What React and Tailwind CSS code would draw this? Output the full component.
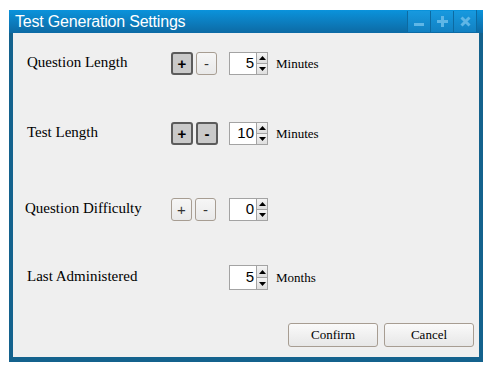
import React, { useState } from 'react';

const serif = { fontFamily: '"Liberation Serif", "Times New Roman", serif' };

const TitleButton = ({ children }) => (
    <div className="w-[23px] h-[21px] mt-[1px] bg-gradient-to-b from-[#1799df] to-[#1281c2] border-l border-[#0d6aa1] flex items-center justify-center">
        {children}
    </div>
);

const ToggleButton = ({ label, pressed, bold, className = '' }) => (
    <button
        className={`h-[23px] rounded-[3px] flex items-center justify-center text-[15px] leading-none ${pressed ? 'bg-[#c9c9c9] border-2 border-[#5b5b5b] text-black font-bold' : 'bg-gradient-to-b from-[#f6f6f6] to-[#e9e9e9] border border-[#a79d92] text-[#333]'} ${className}`}
        style={{ fontFamily: '"Liberation Sans", Arial, sans-serif' }}
    >
        <span className={bold ? 'font-bold' : ''}>{label}</span>
    </button>
);

const Spinner = ({ value, tall }) => (
    <div className="flex items-stretch">
        <div
            className={`w-[28px] ${tall ? 'h-[25px]' : 'h-[23px]'} bg-white border border-[#a3a3a3] flex items-center justify-end pr-[2px] text-[15px] text-black`}
            style={{ fontFamily: '"Liberation Sans", Arial, sans-serif' }}
        >
            {value}
        </div>
        <div className="w-[11px] flex flex-col border border-l-0 border-[#a3a3a3]">
            <div className="flex-1 bg-gradient-to-b from-[#f4f4f4] to-[#dedede] border-b border-[#a3a3a3] flex items-center justify-center">
                <svg width="7" height="4" viewBox="0 0 7 4"><path d="M3.5 0 L7 4 L0 4 Z" fill="#000" /></svg>
            </div>
            <div className="flex-1 bg-gradient-to-b from-[#f4f4f4] to-[#dedede] flex items-center justify-center">
                <svg width="7" height="4" viewBox="0 0 7 4"><path d="M0 0 L7 0 L3.5 4 Z" fill="#000" /></svg>
            </div>
        </div>
    </div>
);

const Row = ({ label, labelClass = '', buttons, value, unit, className = '', tall }) => (
    <div className={`flex items-center ${className}`}>
        <div className={`w-[144px] text-[15px] text-black -mt-[3px] ${labelClass}`} style={serif}>
            {label}
        </div>
        <div className="w-[58px] flex items-center gap-[3px]">{buttons}</div>
        <Spinner value={value} tall={tall} />
        {unit && (
            <span className="ml-[8px] text-[13px] text-black" style={serif}>
                {unit}
            </span>
        )}
    </div>
);

const App = () => {
    const [values] = useState({ question: 5, test: 10, difficulty: 0, last: 5 });

    return (
        <div className="w-[497px] h-[375px] bg-white pt-[10px] pl-[9px]">
            <div className="w-[474px] h-[352px] bg-[#14628d] flex flex-col">
                {/* Title bar */}
                <div className="h-[23px] flex items-stretch bg-gradient-to-b from-[#0a93dc] to-[#0c6aa4]">
                    <div
                        className="flex-1 pl-[6px] text-white text-[16px] tracking-[-0.2px] leading-[23px]"
                        style={{ fontFamily: '"Liberation Sans", Arial, sans-serif' }}
                    >
                        Test Generation Settings
                    </div>
                    <TitleButton>
                        <div className="w-[10px] h-[3px] bg-[#5fb6e6] mt-[6px]" />
                    </TitleButton>
                    <TitleButton>
                        <svg width="11" height="11" viewBox="0 0 11 11">
                            <path d="M4 0 H7 V4 H11 V7 H7 V11 H4 V7 H0 V4 H4 Z" fill="#5fb6e6" />
                        </svg>
                    </TitleButton>
                    <TitleButton>
                        <svg width="11" height="11" viewBox="0 0 11 11">
                            <path d="M1.5 1.5 L9.5 9.5 M9.5 1.5 L1.5 9.5" stroke="#5fb6e6" strokeWidth="3" />
                        </svg>
                    </TitleButton>
                    <div className="w-[7px] border-l border-[#0d6aa1]" />
                </div>

                {/* Content */}
                <div className="flex-1 mx-[4px] mb-[5px] bg-[#efefef] flex flex-col pl-[14px]">
                    <Row
                        className="mt-[19px]"
                        label="Question Length"
                        value={values.question}
                        unit="Minutes"
                        buttons={
                            <>
                                <ToggleButton label="+" pressed className="w-[22px]" />
                                <ToggleButton label="-" className="w-[21px] text-[#8a5a2a]" />
                            </>
                        }
                    />
                    <Row
                        className="mt-[47px]"
                        label="Test Length"
                        value={values.test}
                        unit="Minutes"
                        buttons={
                            <>
                                <ToggleButton label="+" pressed className="w-[22px]" />
                                <ToggleButton label="-" pressed bold className="w-[22px]" />
                            </>
                        }
                    />
                    <Row
                        className="mt-[53px]"
                        label="Question Difficulty"
                        labelClass="-ml-[2px] mr-[2px]"
                        value={values.difficulty}
                        buttons={
                            <>
                                <ToggleButton label="+" className="w-[21px]" />
                                <ToggleButton label="-" className="w-[21px]" />
                            </>
                        }
                    />
                    <Row
                        className="mt-[44px]"
                        label="Last Administered"
                        value={values.last}
                        unit="Months"
                        tall
                    />

                    <div className="mt-auto mb-[10px] flex justify-end gap-[6px] pr-[5px]">
                        <button
                            className="w-[90px] h-[24px] rounded-[3px] border border-[#a79d92] bg-gradient-to-b from-[#fafafa] to-[#e7e7e7] text-[13px] text-black"
                            style={serif}
                        >
                            Confirm
                        </button>
                        <button
                            className="w-[90px] h-[24px] rounded-[3px] border border-[#a79d92] bg-gradient-to-b from-[#fafafa] to-[#e7e7e7] text-[13px] text-black"
                            style={serif}
                        >
                            Cancel
                        </button>
                    </div>
                </div>
            </div>
        </div>
    );
};

export default App;
